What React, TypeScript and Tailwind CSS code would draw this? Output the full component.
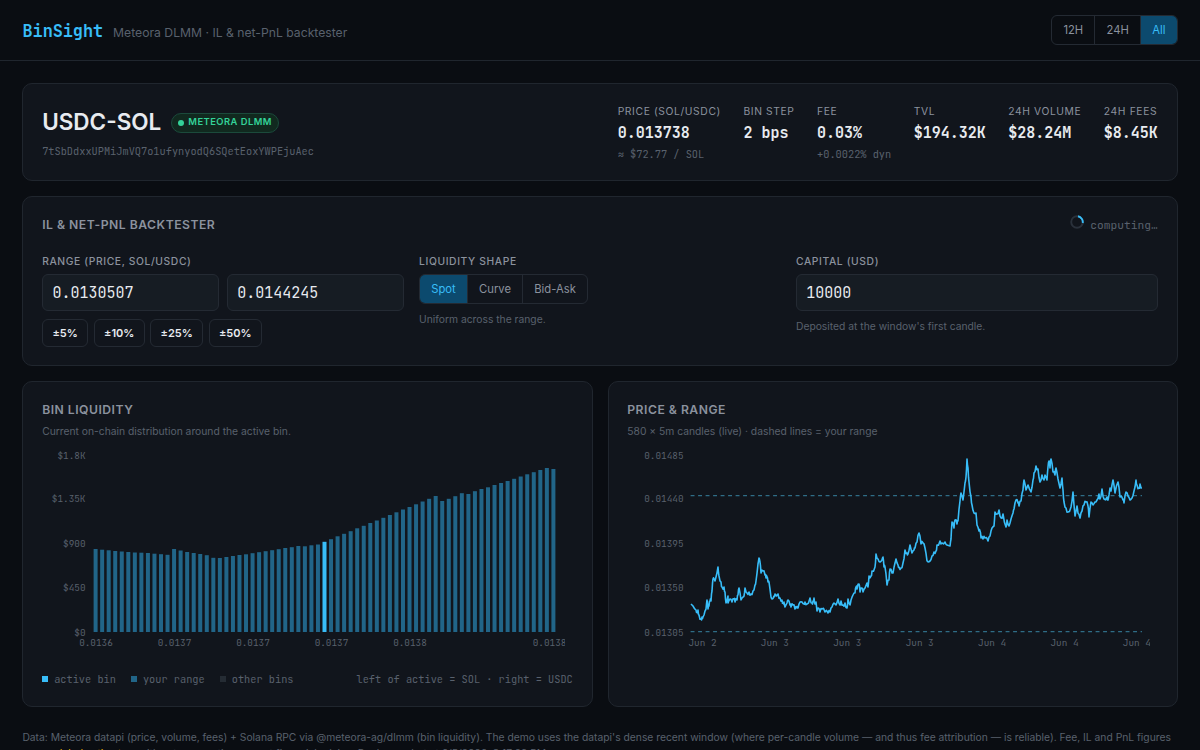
import React from "react";

const MONO = "font-['JetBrains_Mono','DejaVu_Sans_Mono',monospace]";
const LABEL = "text-[10.31px] leading-[15px] tracking-[0.62px] text-[#8b929e] uppercase";
const TITLE = "text-[12.19px] leading-[20px] font-semibold tracking-[0.49px] text-[#8b929e] uppercase";
const HINT = "text-[10.31px] leading-[16px] text-[#59616d]";
const CARD = "rounded-[10px] border border-[#20262e] bg-[#11151c]";
const INPUT = "flex h-[37px] items-center rounded-[6px] border border-[#242a33] bg-[#161c23] px-[9.4px] pt-[1px] text-[15px]";

const stats = [
  { l: "Price (SOL/USDC)", v: "0.013738", s: "≈ $72.77 / SOL" },
  { l: "Bin step", v: "2 bps", s: "" },
  { l: "Fee", v: "0.03%", s: "+0.0022% dyn" },
  { l: "TVL", v: "$194.32K", s: "" },
  { l: "24h volume", v: "$28.24M", s: "" },
  { l: "24h fees", v: "$8.45K", s: "" },
];

function Segmented({ items, active }: { items: string[]; active: number }) {
  return (
    <div className="inline-flex overflow-hidden rounded-[6px] border border-[#242a33]">
      {items.map((t, i) => (
        <button
          key={t}
          className={
            "h-7 px-[11.15px] pt-[1px] text-[11.25px] " +
            (i < items.length - 1 ? "border-r border-[#242a33] " : "") +
            (i === active ? "bg-[#0c4a6e] text-[#38bdf8]" : "text-[#8b929e]")
          }
        >
          {t}
        </button>
      ))}
    </div>
  );
}

const barTops = [
  549, 549.7, 550.3, 551, 551.5, 552, 552.5, 552.7, 553, 553.7, 554.2, 554.8, 549, 550.5, 552, 553, 554, 555.2, 557.8, 558,
  557, 556, 555, 554.3, 553.2, 552.2, 551.2, 550.2, 549.2, 548, 547.2, 546, 546.3, 545.3, 544.5, 541.8, 539.2, 536.3, 533.8,
  531.2, 528.3, 525.8, 523, 520.5, 517.8, 515, 512.3, 509.5, 507, 504.3, 501.5, 498.8, 496, 501, 498.8, 496.2, 493.2, 494,
  491.2, 489, 487.3, 485, 483, 481, 478.8, 476.5, 474.3, 472.2, 470, 468, 469,
];

function Tick({ x, y, children, anchor = "end" }: { x: number; y: number; children: string; anchor?: "end" | "middle" }) {
  return (
    <text x={x} y={y} textAnchor={anchor} fill="#59616d" className={MONO + " text-[9.375px]"}>
      {children}
    </text>
  );
}

function BinChart() {
  return (
    <svg className="mt-[7px] block h-[210px] w-[523px]" viewBox="42 446 523 210">
      <Tick x={85.5} y={458.5}>$1.8K</Tick>
      <Tick x={85.5} y={501.5}>$1.35K</Tick>
      <Tick x={85.5} y={546.5}>$900</Tick>
      <Tick x={85.5} y={590.5}>$450</Tick>
      <Tick x={85.5} y={635.5}>$0</Tick>
      {barTops.map((t, i) => (
        <rect key={i} x={93.6 + i * 6.54} y={t} width={4} height={632 - t} fill={i === 35 ? "#38bdf8" : "#216588"} />
      ))}
      {["0.0136", "0.0137", "0.0137", "0.0137", "0.0138"].map((t, i) => (
        <Tick key={i} x={96 + i * 78.5} y={646} anchor="middle">{t}</Tick>
      ))}
      <Tick x={549.6} y={646} anchor="middle">0.0138</Tick>
    </svg>
  );
}

const pricePts =
  "691,604 693,606 696,610 697,612 698,610 699,615 701,619 702,617 703,617 705,611 706,609 707,600 708,609 709,606 710,601 711,601 712,591 713,579 714,579 715,581 716,577 718,567 719,576 721,582 722,587 724,587 725,592 726,603 728,596 728,603 730,599 732,602 734,599 735,602 737,600 738,595 739,588 741,600 743,597 744,596 745,588 747,593 749,592 751,594 753,591 755,585 756,581 758,564 759,558 760,562 761,573 763,571 765,575 766,578 767,577 768,582 769,582 771,597 772,599 774,596 775,594 778,594 780,598 782,600 783,603 784,602 785,607 787,603 788,600 790,605 791,607 793,605 795,609 797,608 798,608 800,602 802,602 804,604 805,602 807,604 810,598 812,603 813,601 814,598 815,604 816,602 817,611 818,608 820,612 822,609 825,612 828,613 830,612 832,607 834,603 836,605 838,599 840,605 841,601 843,605 845,603 847,608 848,599 850,605 851,600 853,595 855,593 856,587 857,589 859,584 860,592 862,588 863,592 865,588 867,583 868,587 869,576 871,576 872,571 875,567 876,554 878,559 880,562 882,560 883,557 884,567 885,567 887,585 889,580 890,569 892,573 893,573 895,563 896,559 898,565 899,567 901,568 903,563 905,550 907,553 908,554 910,545 912,553 914,550 915,548 917,542 919,533 921,544 923,543 925,548 927,561 928,562 930,561 932,556 934,552 936,551 937,545 940,541 942,543 945,542 947,545 950,546 951,539 952,522 954,528 955,520 957,524 958,521 960,501 961,493 963,500 965,483 966,477 967,459 968,468 969,482 971,497 972,505 974,513 976,513 977,525 979,531 980,531 981,538 983,539 985,538 988,541 990,536 992,528 994,526 995,512 997,514 999,510 1001,518 1003,514 1006,527 1007,520 1009,526 1011,519 1013,513 1014,509 1016,500 1018,503 1019,506 1021,501 1023,490 1024,480 1026,490 1028,485 1031,492 1033,480 1034,473 1036,466 1038,469 1040,482 1042,475 1044,480 1045,475 1047,480 1048,467 1049,461 1050,468 1051,459 1053,472 1055,475 1056,468 1058,479 1060,488 1062,478 1063,490 1064,502 1066,508 1068,512 1071,507 1073,492 1075,516 1077,506 1078,513 1080,518 1082,511 1084,505 1086,502 1088,506 1089,517 1091,502 1093,505 1095,502 1097,500 1099,494 1100,499 1102,489 1104,499 1107,497 1108,500 1110,488 1111,491 1113,480 1115,493 1118,482 1120,497 1123,500 1124,503 1126,492 1128,496 1130,500 1132,498 1134,491 1136,480 1137,485 1139,488 1140,484 1142,488";

const coarse = pricePts.split(" ").map((p) => p.split(",").map(Number));
const series = coarse.flatMap(([x, y], i) => {
  const next = coarse[i + 1];
  if (!next) return [[x, y]];
  const wobble = Math.sin(i * 12.9) * 2.2;
  return [[x, y], [(x + next[0]) / 2, (y + next[1]) / 2 + wobble]];
});

function PriceChart() {
  return (
    <svg className="mt-[7px] block h-[210px] w-[523px]" viewBox="627 446 523 210">
      {["0.01485", "0.01440", "0.01395", "0.01350", "0.01305"].map((t, i) => (
        <Tick key={t} x={683.5} y={[458.5, 501.5, 546.5, 590.5, 635.5][i]}>{t}</Tick>
      ))}
      <path d="M690.6 495.6H1142M690.6 631.6H1142" stroke="#2f6d86" strokeWidth="1.2" strokeDasharray="3.9 3.6" />
      <polyline points={series.map((p) => p.join(",")).join(" ")} fill="none" stroke="#38bdf8" strokeWidth="1.6" strokeLinejoin="round" />
      {["Jun 2", "Jun 3", "Jun 3", "Jun 3", "Jun 4", "Jun 4", "Jun 4"].map((t, i) => (
        <Tick key={i} x={702.5 + i * 72.4} y={646} anchor="middle">{t}</Tick>
      ))}
    </svg>
  );
}

function Legend({ color, text }: { color: string; text: string }) {
  return (
    <span className="flex items-center gap-[6px]">
      <i className={"size-[6px] " + color} />
      {text}
    </span>
  );
}

export default function App() {
  return (
    <div className="h-[750px] overflow-hidden bg-[#0a0d12] font-['Inter',sans-serif] text-[#e8ebf0]">
      <header className="flex h-[61px] items-center justify-between border-b border-[#20262e] px-[22.5px]">
        <div className="flex items-baseline gap-[10px] pt-[3px]">
          <span className={MONO + " text-[16.9px] font-semibold tracking-[-0.06px] text-[#38bdf8]"}>BinSight</span>
          <span className="text-[12.19px] text-[#59616d]">Meteora DLMM · IL &amp; net-PnL backtester</span>
        </div>
        <Segmented items={["12H", "24H", "All"]} active={2} />
      </header>

      <main className="px-[22.4px] pt-[22px]">
        <section className={CARD + " flex h-[98px] justify-between px-[18.75px] pt-[19px]"}>
          <div>
            <div className="flex h-[36px] items-center gap-[10px] pt-[1px]">
              <h1 className="text-[22.5px] font-semibold">USDC-SOL</h1>
              <span className="mt-[2px] flex h-[20px] items-center gap-[4px] rounded-full border border-[#1b4a3b] bg-[#11291f] px-[6px] text-[9.375px] font-semibold tracking-[0.47px] text-[#34d399]">
                <i className="size-[6px] rounded-full bg-[#34d399]" />
                METEORA DLMM
              </span>
            </div>
            <p className={MONO + " mt-[4px] text-[10.31px] leading-[16px] text-[#59616d]"}>7tSbDdxxUPMiJmVQ7o1ufynyodQ6SQetEoxYWPEjuAec</p>
          </div>
          <div className="flex gap-[22.5px] pt-[1px]">
            {stats.map((s) => (
              <div key={s.l} className="whitespace-nowrap">
                <div className={LABEL}>{s.l}</div>
                <div className={MONO + " mt-[2px] text-[15px] leading-[24px] font-semibold"}>{s.v}</div>
                <div className={MONO + " mt-[1px] text-[10.31px] leading-[17px] text-[#59616d]"}>{s.s}</div>
              </div>
            ))}
          </div>
        </section>

        <section className={CARD + " mt-[15px] h-[170px] px-[18.75px] pt-[18px]"}>
          <div className="flex h-[20px] justify-between">
            <h2 className={TITLE}>IL &amp; net-PnL backtester</h2>
            <span className={MONO + " flex text-[11.25px] leading-[20px] text-[#59616d]"}>
              <svg className="mr-[6px] size-[14px]" viewBox="0 0 14 14" fill="none" strokeWidth="1.9">
                <circle cx="7" cy="7" r="5.8" stroke="#2a313b" />
                <path d="M7 1.2a5.8 5.8 0 0 1 5.8 5.8" stroke="#38bdf8" transform="rotate(10 7 7)" />
              </svg>
              computing…
            </span>
          </div>
          <div className="mt-[19px] grid grid-cols-3 gap-[15px]">
            <div>
              <div className={LABEL + " font-medium"}>Range (price, SOL/USDC)</div>
              <div className={MONO + " mt-[5px] grid grid-cols-2 gap-[7.5px]"}>
                <div className={INPUT}>0.0130507</div>
                <div className={INPUT}>0.0144245</div>
              </div>
              <div className="mt-[8px] flex gap-[5.6px]">
                {["±5%", "±10%", "±25%", "±50%"].map((t) => (
                  <button key={t} className="h-[28px] rounded-[6px] border border-[#242a33] px-[9.3px] pt-[1px] text-[11px] font-semibold">{t}</button>
                ))}
              </div>
            </div>
            <div>
              <div className={LABEL + " font-medium"}>Liquidity shape</div>
              <div className="mt-[5px] flex">
                <Segmented items={["Spot", "Curve", "Bid-Ask"]} active={0} />
              </div>
              <p className={HINT + " mt-[7px]"}>Uniform across the range.</p>
            </div>
            <div>
              <div className={LABEL + " font-medium"}>Capital (USD)</div>
              <div className={MONO + " mt-[5px] " + INPUT}>10000</div>
              <p className={HINT + " mt-[7px]"}>Deposited at the window's first candle.</p>
            </div>
          </div>
        </section>

        <div className="mt-[15px] grid grid-cols-2 gap-[15px]">
          <section className={CARD + " h-[326px] px-[18.75px] pt-[18px]"}>
            <h2 className={TITLE}>Bin liquidity</h2>
            <p className={HINT + " mt-[3px]"}>Current on-chain distribution around the active bin.</p>
            <BinChart />
            <div className={MONO + " mt-[15px] flex gap-[15px] text-[10.31px] leading-[16px] text-[#59616d]"}>
              <Legend color="bg-[#38bdf8]" text="active bin" />
              <Legend color="bg-[#216588]" text="your range" />
              <Legend color="bg-[#252c34]" text="other bins" />
              <span className="ml-auto">left of active = SOL · right = USDC</span>
            </div>
          </section>
          <section className={CARD + " h-[326px] px-[18.75px] pt-[18px]"}>
            <h2 className={TITLE}>Price &amp; range</h2>
            <p className={HINT + " mt-[3px]"}>580 × 5m candles (live) · dashed lines = your range</p>
            <PriceChart />
          </section>
        </div>

        <footer className="mt-[23px] text-[10.31px] leading-[15.5px] text-[#59616d]">
          Data: Meteora datapi (price, volume, fees) + Solana RPC via @meteora-ag/dlmm (bin liquidity). The demo uses the datapi's dense recent window (where per-candle volume — and thus fee attribution — is reliable). Fee, IL and PnL figures
          are <span className="text-[#eab308]">modeled estimates</span>, with set assumptions — not financial advice. Pool snapshot at 6/5/2026, 8:17:29 PM
        </footer>
      </main>
    </div>
  );
}
